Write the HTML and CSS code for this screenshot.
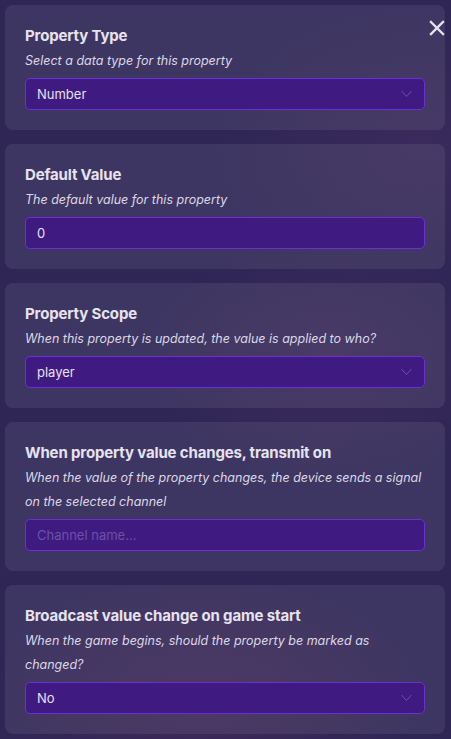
FILE: index.html
```html
<!DOCTYPE html>
<html>
<head>
<meta charset="utf-8">
<link rel="stylesheet" href="styles.css">
</head>
<body>
<div class="panel">
  <div class="card">
    <div class="title">Property Type</div>
    <div class="desc">Select a data type for this property</div>
    <div class="field select"><span>Number</span><svg class="chev" width="11" height="8" viewBox="0 0 11 8"><path d="M0.5 1 L5.5 6.5 L10.5 1" fill="none" stroke="currentColor" stroke-width="1"/></svg></div>
  </div>
  <div class="card">
    <div class="title">Default Value</div>
    <div class="desc">The default value for this property</div>
    <div class="field"><span>0</span></div>
  </div>
  <div class="card">
    <div class="title">Property Scope</div>
    <div class="desc">When this property is updated, the value is applied to who?</div>
    <div class="field select"><span>player</span><svg class="chev" width="11" height="8" viewBox="0 0 11 8"><path d="M0.5 1 L5.5 6.5 L10.5 1" fill="none" stroke="currentColor" stroke-width="1"/></svg></div>
  </div>
  <div class="card">
    <div class="title">When property value changes, transmit on</div>
    <div class="desc">When the value of the property changes, the device sends a signal on the selected channel</div>
    <div class="field"><span class="placeholder">Channel name...</span></div>
  </div>
  <div class="card">
    <div class="title">Broadcast value change on game start</div>
    <div class="desc">When the game begins, should the property be marked as changed?</div>
    <div class="field select"><span>No</span><svg class="chev" width="11" height="8" viewBox="0 0 11 8"><path d="M0.5 1 L5.5 6.5 L10.5 1" fill="none" stroke="currentColor" stroke-width="1"/></svg></div>
  </div>
</div>
<svg class="close" width="16" height="16" viewBox="0 0 16 16"><path d="M2 2 L14 14 M14 2 L2 14" stroke="#e4e1ec" stroke-width="2.4" stroke-linecap="square"/></svg>
</body>
</html>
```
FILE: styles.css
```css
html, body {
  margin: 0;
  padding: 0;
}
body {
  width: 451px;
  height: 739px;
  overflow: hidden;
  position: relative;
  font-family: Inter, "Noto Sans", sans-serif;
  background:
    radial-gradient(ellipse 180px 120px at 330px 360px, rgba(120, 70, 120, 0.18), transparent),
    radial-gradient(ellipse 200px 140px at 420px 150px, rgba(120, 70, 120, 0.15), transparent),
    radial-gradient(ellipse 220px 120px at 200px 700px, rgba(130, 60, 100, 0.2), transparent),
    #2f2656;
}
.panel {
  display: flex;
  flex-direction: column;
  gap: 14px;
  padding: 5px 6px 0 5px;
}
.card {
  background: rgba(255, 255, 255, 0.075);
  border-radius: 8px;
  padding: 20px 20px 20px 20px;
  display: flex;
  flex-direction: column;
}
.title {
  font-size: 15px;
  font-weight: 700;
  line-height: 22px;
  color: #e6e3ee;
  letter-spacing: -0.15px;
}
.desc {
  margin-top: 2px;
  font-size: 12.5px;
  font-style: italic;
  line-height: 24px;
  color: #dcd8e6;
}
.field {
  margin-top: 5px;
  height: 32px;
  box-sizing: border-box;
  background: #3f1a80;
  border: 1px solid #6a30d4;
  border-radius: 5px;
  display: flex;
  align-items: center;
  justify-content: space-between;
  padding: 0 12px 0 11px;
  font-size: 13px;
  color: #e6e1f0;
}
.placeholder {
  color: #6c51a8;
}
.chev {
  color: #6d52a6;
}
.close {
  position: absolute;
  left: 429px;
  top: 20px;
}
```
